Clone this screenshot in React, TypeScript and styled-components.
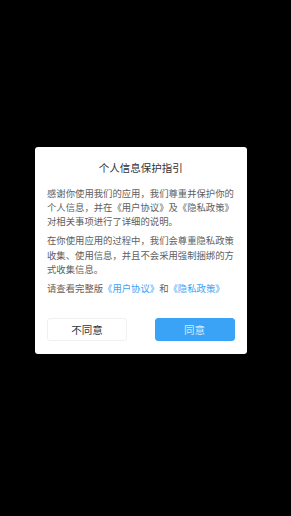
import React from "react";
import styled, { createGlobalStyle } from "styled-components";

const Global = createGlobalStyle`
  html, body { margin: 0; padding: 0; background: #000; }
  body { font-family: "Noto Sans CJK SC", "Noto Sans", sans-serif; }
`;

const Screen = styled.div`
  width: 291px;
  height: 516px;
  background: #000;
  display: flex;
  align-items: flex-start;
  padding: 147px 0 0 34.5px;
  box-sizing: border-box;
`;

const Dialog = styled.div`
  width: 212.5px;
  height: 207px;
  background: #fff;
  border-radius: 3px;
  box-sizing: border-box;
  padding: 15px 12.5px 0 12.5px;
  display: flex;
  flex-direction: column;
`;

const Title = styled.div`
  font-size: 10.5px;
  line-height: 12px;
  color: #333;
  text-align: center;
  margin-bottom: 11.5px;
`;

const Para = styled.p`
  margin: 0 0 4.5px 0;
  font-size: 9.35px;
  line-height: 14.4px;
  color: #606060;
  word-break: break-all;
`;

const Link = styled.span`
  color: #3aa3f5;
`;

const Buttons = styled.div`
  display: flex;
  justify-content: space-between;
  margin-top: 18.5px;
`;

const Button = styled.div<{ $primary?: boolean }>`
  width: 80px;
  height: 23px;
  box-sizing: border-box;
  border-radius: 3px;
  display: flex;
  align-items: center;
  justify-content: center;
  font-size: 10.5px;
  color: ${(p) => (p.$primary ? "#d8ecfd" : "#333")};
  background: ${(p) => (p.$primary ? "#3aa3f5" : "#fff")};
  border: 1px solid ${(p) => (p.$primary ? "#3aa3f5" : "#f0f0f0")};
`;

export default function App() {
  return (
    <>
      <Global />
      <Screen>
        <Dialog>
          <Title>个人信息保护指引</Title>
          <Para>
            感谢你使用我们的应用，我们尊重并保护你的个人信息，并在《用户协议》及《隐私政策》对相关事项进行了详细的说明。
          </Para>
          <Para>
            在你使用应用的过程中，我们会尊重隐私政策收集、使用信息，并且不会采用强制捆绑的方式收集信息。
          </Para>
          <Para>
            请查看完整版<Link>《用户协议》</Link>和<Link>《隐私政策》</Link>
          </Para>
          <Buttons>
            <Button>不同意</Button>
            <Button $primary>同意</Button>
          </Buttons>
        </Dialog>
      </Screen>
    </>
  );
}
